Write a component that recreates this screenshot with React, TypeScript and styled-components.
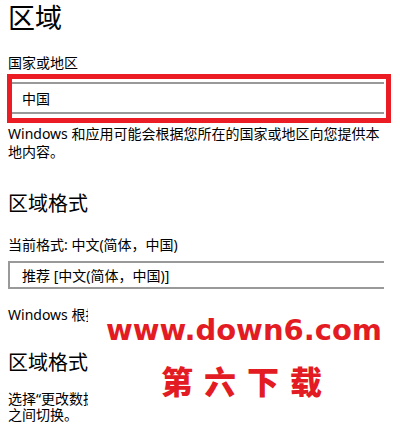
import styled, { createGlobalStyle } from 'styled-components';

const GlobalStyle = createGlobalStyle`
  html, body {
    margin: 0;
    padding: 0;
    background: #ffffff;
  }
  body {
    font-family: "Noto Sans", "Noto Sans CJK SC", sans-serif;
    color: #000000;
  }
`;

function App() {
  return (
    <>
      <GlobalStyle />
      <Page>
        <Title>区域</Title>
        <Label>国家或地区</Label>
        <Highlight>
          <Field flush>中国</Field>
        </Highlight>
        <Description>
          Windows 和应用可能会根据您所在的国家或地区向您提供本地内容。
        </Description>
        <SubTitle>区域格式</SubTitle>
        <Label>当前格式: 中文(简体，中国)</Label>
        <Field>推荐 [中文(简体，中国)]</Field>
        <Note>Windows 根据你的区域格式显示日期和时间。</Note>
        <SubTitle second>区域格式数据</SubTitle>
        <Tight>
          选择“更改数据格式”以在日历、日期格式
          <br />
          之间切换。
        </Tight>

        <Watermark>
          <SiteName>www.down6.com</SiteName>
          <SiteTitle>第六下载</SiteTitle>
        </Watermark>
      </Page>
    </>
  );
}

export default App;

const Page = styled.div`
  position: relative;
  width: 400px;
  height: 430px;
  overflow: hidden;
  padding: 0 0 0 8px;
  box-sizing: border-box;
  display: flex;
  flex-direction: column;
  align-items: flex-start;
`;

const Title = styled.h1`
  margin: 0;
  font-size: 27px;
  line-height: 36px;
  font-weight: 400;
`;

const Label = styled.div`
  margin-top: 17px;
  font-size: 14px;
  line-height: 20px;
`;

const Highlight = styled.div`
  margin: 1px 0 0 -1px;
  width: 384px;
  box-sizing: border-box;
  border: 5px solid #ec1c24;
  padding: 3px 2px 4px 0;
`;

const Field = styled.div<{ flush?: boolean }>`
  box-sizing: border-box;
  width: ${props => (props.flush ? '372px' : '376px')};
  height: ${props => (props.flush ? '32px' : '28px')};
  margin-top: ${props => (props.flush ? '0' : '6px')};
  border: 2px solid #999999;
  border-right: none;
  border-left: ${props => (props.flush ? 'none' : '2px solid #999999')};
  padding-left: ${props => (props.flush ? '10px' : '12px')};
  display: flex;
  align-items: center;
  font-size: 14px;
`;

const Description = styled.p`
  margin: 2px 0 0 0;
  width: 378px;
  font-size: 14px;
  line-height: 18px;
`;

const SubTitle = styled.h2<{ second?: boolean }>`
  margin: ${props => (props.second ? '24px' : '29px')} 0 0 0;
  font-size: 20px;
  line-height: 28px;
  font-weight: 400;
  white-space: nowrap;
`;

const Note = styled.div`
  margin-top: 16px;
  font-size: 14px;
  line-height: 20px;
  white-space: nowrap;
`;

const Tight = styled.p`
  margin: 14px 0 0 0;
  font-size: 14px;
  line-height: 16px;
  white-space: nowrap;
`;

const Watermark = styled.div`
  position: absolute;
  left: 88px;
  top: 298px;
  width: 312px;
  height: 127px;
  background: #ffffff;
  display: flex;
  flex-direction: column;
  align-items: center;
  color: #e31b23;
  font-weight: 700;
`;

const SiteName = styled.div`
  margin-top: 14px;
  font-family: "DejaVu Sans", "Liberation Sans", sans-serif;
  font-size: 29px;
  line-height: 36px;
  font-weight: 700;
`;

const SiteTitle = styled.div`
  margin-top: 12px;
  padding-left: 6px;
  font-family: "Noto Sans CJK SC", sans-serif;
  font-size: 32px;
  line-height: 40px;
  font-weight: 900;
  letter-spacing: 11px;
`;
